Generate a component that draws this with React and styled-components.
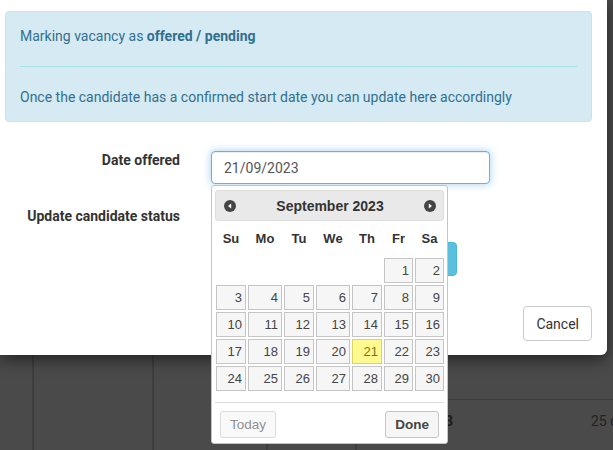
import React from 'react';
import styled, { createGlobalStyle } from 'styled-components';

const GlobalStyle = createGlobalStyle`
  body {
    margin: 0;
    background: #4a4a4a;
    font-family: Roboto, "Liberation Sans", Arial, sans-serif;
    overflow: hidden;
  }
`;

const weeks = [
  [null, null, null, null, null, 1, 2],
  [3, 4, 5, 6, 7, 8, 9],
  [10, 11, 12, 13, 14, 15, 16],
  [17, 18, 19, 20, 21, 22, 23],
  [24, 25, 26, 27, 28, 29, 30],
];
const dayNames = ['Su', 'Mo', 'Tu', 'We', 'Th', 'Fr', 'Sa'];

const NavIcon = ({ dir }) => (
  <svg width="12" height="12" viewBox="0 0 12 12">
    <circle cx="6" cy="6" r="6" fill="#454545" />
    {dir === 'prev'
      ? <polygon points="4,6 7.2,3.4 7.2,8.6" fill="#fff" />
      : <polygon points="8,6 4.8,3.4 4.8,8.6" fill="#fff" />}
  </svg>
);

const App = () => {
  return (
    <Page>
      <GlobalStyle />
      <Modal>
        <Alert>
          <AlertText>Marking vacancy as <b>offered / pending</b></AlertText>
          <AlertRule />
          <AlertText>Once the candidate has a confirmed start date you can update here accordingly</AlertText>
        </Alert>

        <Form>
          <Label>Date offered</Label>
          <Control>
            <DateInput value="21/09/2023" readOnly />
            <Picker>
              <PickerHeader>
                <NavIcon dir="prev" />
                <Title>September 2023</Title>
                <NavIcon dir="next" />
              </PickerHeader>
              <DayGrid>
                {dayNames.map(d => <DayHead key={d}>{d}</DayHead>)}
                {weeks.flat().map((day, i) => (
                  day
                    ? <DayCell key={i} $active={day === 21}>{day}</DayCell>
                    : <span key={i} />
                ))}
              </DayGrid>
              <ButtonPane>
                <PaneButton>Today</PaneButton>
                <PaneButton $primary>Done</PaneButton>
              </ButtonPane>
            </Picker>
          </Control>

          <Label>Update candidate status</Label>
          <Control>
            <InfoButton>Offered / pending</InfoButton>
          </Control>
        </Form>

        <Footer>
          <CancelButton>Cancel</CancelButton>
        </Footer>
      </Modal>

      <BackTable>
        <BackCol />
        <BackCol />
        <BackCol />
        <BackCol />
        <BackCol>
          <BackRow />
          <BackRow $data>
            <span />
            <b>2023</b>
            <span>25 days</span>
          </BackRow>
        </BackCol>
      </BackTable>
    </Page>
  );
};

const Page = styled.div`
  width: 613px;
  height: 450px;
  position: relative;
  overflow: hidden;
`;

const Modal = styled.div`
  position: relative;
  z-index: 2;
  width: 607px;
  height: 355px;
  box-sizing: border-box;
  padding: 11px 15px 14px 5px;
  background: #fff;
  border-bottom-right-radius: 6px;
  box-shadow: 0 5px 15px rgba(0, 0, 0, 0.5);
`;

const Alert = styled.div`
  box-sizing: border-box;
  padding: 14px;
  background: #d6eaf4;
  border: 1px solid #bfe6f1;
  border-radius: 4px;
  color: #31708f;
`;

const AlertText = styled.div`
  font-size: 14px;
  line-height: 20px;

  b {
    font-weight: 700;
  }
`;

const AlertRule = styled.div`
  margin: 20px 0;
  border-top: 1px solid #a6e1ec;
`;

const Form = styled.div`
  display: grid;
  grid-template-columns: 175px 279px;
  column-gap: 31px;
  row-gap: 23px;
  margin-top: 29px;
`;

const Label = styled.div`
  text-align: right;
  font-size: 14px;
  font-weight: 700;
  line-height: 20px;
  color: #333;
  margin-top: -1px;
`;

const Control = styled.div`
  position: relative;
`;

const DateInput = styled.input`
  display: block;
  box-sizing: border-box;
  width: 279px;
  height: 33px;
  padding: 6px 12px;
  border: 1px solid #66afe9;
  border-radius: 4px;
  outline: none;
  font-family: Roboto, sans-serif;
  font-size: 14px;
  color: #555;
  box-shadow: inset 0 1px 1px rgba(0, 0, 0, 0.075), 0 0 8px rgba(102, 175, 233, 0.6);
`;

const Picker = styled.div`
  position: absolute;
  top: calc(100% + 1px);
  left: 0;
  z-index: 10;
  width: 237px;
  box-sizing: border-box;
  padding: 4px 3px 0;
  background: #fff;
  border: 1px solid #c5c5c5;
  border-radius: 3px;
  font-family: "Liberation Sans", Arial, sans-serif;
  color: #333;
`;

const PickerHeader = styled.div`
  display: flex;
  align-items: center;
  justify-content: space-between;
  box-sizing: border-box;
  height: 31px;
  padding: 0 7px 0 8px;
  background: #e9e9e9;
  border: 1px solid #dddddd;
  border-radius: 3px;

  svg {
    display: block;
  }
`;

const Title = styled.div`
  font-size: 14px;
  font-weight: 700;
  color: #333;
`;

const DayGrid = styled.div`
  display: grid;
  grid-template-columns: 30px 34px 30px 34px 30px 29px 29px;
  grid-template-rows: 33px;
  grid-auto-rows: 25px;
  column-gap: 2px;
  row-gap: 2px;
  padding-left: 1px;
  margin-top: 2px;
`;

const DayHead = styled.div`
  display: flex;
  align-items: center;
  justify-content: center;
  padding-bottom: 3px;
  font-size: 13px;
  font-weight: 700;
  color: #333;
`;

const DayCell = styled.div`
  box-sizing: border-box;
  padding: 0 3px;
  text-align: right;
  font-size: 13px;
  line-height: 23px;
  background: ${p => (p.$active ? '#fffa90' : '#f6f6f6')};
  border: 1px solid ${p => (p.$active ? '#dad55e' : '#c5c5c5')};
  color: ${p => (p.$active ? '#777620' : '#454545')};
`;

const ButtonPane = styled.div`
  display: flex;
  justify-content: space-between;
  margin-top: 11px;
  padding: 8px 5px 5px;
  border-top: 1px solid #dddddd;
`;

const PaneButton = styled.button`
  height: 27px;
  padding: 0 9px;
  font-family: "Liberation Sans", Arial, sans-serif;
  font-size: 13.5px;
  font-weight: ${p => (p.$primary ? 700 : 400)};
  color: #454545;
  background: #f6f6f6;
  border: 1px solid #c5c5c5;
  border-radius: 3px;
  opacity: ${p => (p.$primary ? 1 : 0.6)};
`;

const InfoButton = styled.button`
  display: block;
  margin-top: 35px;
  width: 246px;
  height: 34px;
  font-family: Roboto, sans-serif;
  font-size: 14px;
  color: #fff;
  background: #5bc0de;
  border: 1px solid #46b8da;
  border-radius: 4px;
`;

const Footer = styled.div`
  display: flex;
  justify-content: flex-end;
  margin-top: 30px;
`;

const CancelButton = styled.button`
  height: 35px;
  padding: 6px 12px;
  font-family: Roboto, sans-serif;
  font-size: 14px;
  color: #333;
  background: #fff;
  border: 1px solid #ccc;
  border-radius: 4px;
`;

const BackTable = styled.div`
  display: grid;
  grid-template-columns: 32px 120px 114px 89px 1fr;
  height: 95px;
`;

const BackCol = styled.div`
  display: flex;
  flex-direction: column;
  &:not(:first-child) {
    border-left: 2px solid #3e3e3e;
  }
`;

const BackRow = styled.div`
  box-sizing: border-box;
  height: ${p => (p.$data ? 'auto' : '45px')};
  flex: ${p => (p.$data ? 1 : 'none')};
  border-bottom: ${p => (p.$data ? 'none' : '1px solid #3c3c3c')};
  display: grid;
  grid-template-columns: 64px 170px 1fr;
  padding-top: 11px;
  font-size: 14px;
  line-height: 20px;
  color: #222;
  white-space: nowrap;

  b {
    font-weight: 700;
    color: #1a1a1a;
  }
`;

export default App;
